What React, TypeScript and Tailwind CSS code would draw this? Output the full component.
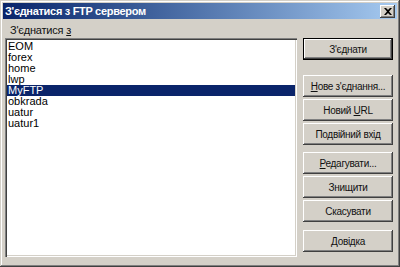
import React from 'react';

const ITEMS = ['EOM', 'forex', 'home', 'lwp', 'MyFTP', 'obkrada', 'uatur', 'uatur1'];

const raised =
  'shadow-[inset_-1px_-1px_0_#404040,inset_1px_1px_0_#ffffff,inset_-2px_-2px_0_#808080,inset_2px_2px_0_#d4d0c8]';

const Btn: React.FC<{ children: React.ReactNode; def?: boolean; className?: string }> = ({ children, def, className = '' }) => (
  <button
    className={`h-[22px] w-[90px] flex items-center justify-center text-[10px] tracking-[-0.3px] text-[#111] bg-[#d4d0c8] ${
      def
        ? 'border border-black shadow-[inset_-1px_-1px_0_#404040,inset_1px_1px_0_#ffffff,inset_-2px_-2px_0_#808080]'
        : raised
    } ${className}`}
  >
    {children}
  </button>
);

const App: React.FC = () => {
  return (
    <div
      className="w-[400px] h-[267px] bg-[#d4d0c8] p-[3px] flex flex-col overflow-hidden shadow-[inset_-1px_-1px_0_#404040,inset_1px_1px_0_#d4d0c8,inset_-2px_-2px_0_#808080,inset_2px_2px_0_#ffffff]"
      style={{ fontFamily: '"Liberation Sans", Arial, sans-serif' }}
    >
      {/* Title bar */}
      <div className="h-[16px] flex items-center justify-between bg-gradient-to-r from-[#0a246a] to-[#a6caf0] pl-[2px] pr-[2px]">
        <span className="text-white font-bold text-[11px] tracking-[-0.3px] leading-none">З'єднатися з FTP сервером</span>
        <div className={`w-[15px] h-[13px] bg-[#d4d0c8] flex items-center justify-center ${raised}`}>
          <svg width="8" height="7" viewBox="0 0 8 7">
            <path d="M0 0h2l2 2 2-2h2L5 3.5 8 7H6L4 5 2 7H0l3-3.5z" fill="#000" />
          </svg>
        </div>
      </div>

      {/* Body */}
      <div className="flex flex-1 pt-[19px] pl-[2px] gap-[6px]">
        <div className="relative w-[292px]">
          <div className="absolute -top-[14px] left-[5px] text-[11px] tracking-[-0.2px] leading-[13px] text-[#111]">
            З'єднатися <span className="underline">з</span>
          </div>
          <div className="h-[219px] bg-white pt-[3px] pl-[2px] pr-[2px] shadow-[inset_1px_1px_0_#808080,inset_2px_2px_0_#404040,inset_-1px_-1px_0_#ffffff,inset_-2px_-2px_0_#d4d0c8]">
            {ITEMS.map((it) => (
              <div
                key={it}
                className={`h-[11px] text-[11px] leading-[11px] pl-[1px] ${
                  it === 'MyFTP' ? 'bg-[#0a246a] text-white' : 'text-black'
                }`}
              >
                {it}
              </div>
            ))}
          </div>
        </div>

        <div className="flex flex-col">
          <Btn def>З'єднати</Btn>
          <Btn className="mt-[15px]">
            <span><span className="underline">Н</span>ове з'єднання...</span>
          </Btn>
          <Btn className="mt-[2px]">
            <span>Новий <span className="underline">U</span>RL</span>
          </Btn>
          <Btn className="mt-[2px]">Подвійний вхід</Btn>
          <Btn className="mt-[7px]">
            <span><span className="underline">Р</span>едагувати...</span>
          </Btn>
          <Btn className="mt-[2px]">Знищити</Btn>
          <Btn className="mt-[2px]">Скасувати</Btn>
          <Btn className="mt-[8px]">Довідка</Btn>
        </div>
      </div>
    </div>
  );
};

export default App;
